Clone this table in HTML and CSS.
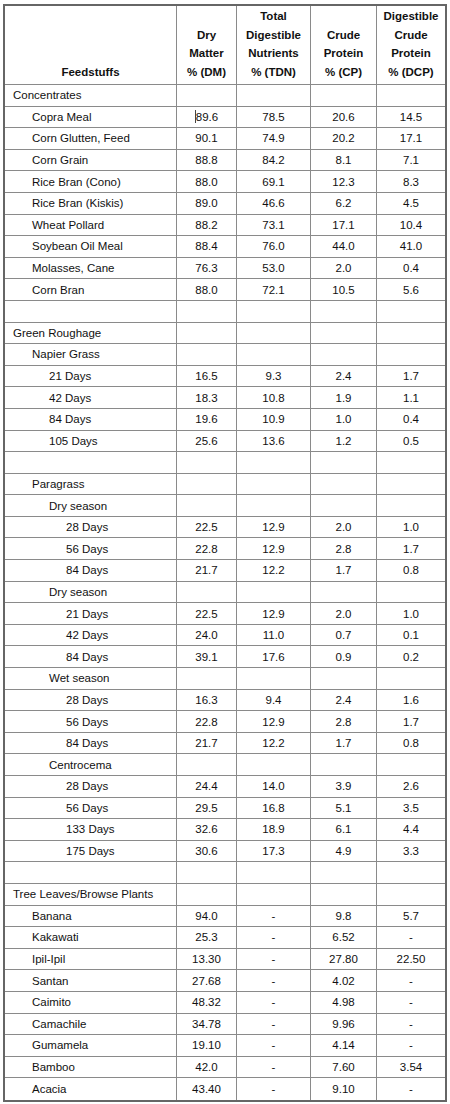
FILE: index.html
```html
<!DOCTYPE html>
<html lang="en">
<head>
<meta charset="utf-8">
<title>Feedstuffs</title>
<link rel="stylesheet" href="styles.css">
</head>
<body>
<table class="feed">
  <colgroup>
    <col class="c-name">
    <col class="c-dm">
    <col class="c-tdn">
    <col class="c-cp">
    <col class="c-dcp">
  </colgroup>
  <thead>
    <tr>
      <th>Feedstuffs</th>
      <th>Dry<br>Matter<br>% (DM)</th>
      <th>Total<br>Digestible<br>Nutrients<br>% (TDN)</th>
      <th>Crude<br>Protein<br>% (CP)</th>
      <th>Digestible<br>Crude<br>Protein<br>% (DCP)</th>
    </tr>
  </thead>
  <tbody>
    <tr><td class="l0">Concentrates</td><td></td><td></td><td></td><td></td></tr>
    <tr><td class="l1">Copra Meal</td><td><span class="caret"></span>89.6</td><td>78.5</td><td>20.6</td><td>14.5</td></tr>
    <tr><td class="l1">Corn Glutten, Feed</td><td>90.1</td><td>74.9</td><td>20.2</td><td>17.1</td></tr>
    <tr><td class="l1">Corn Grain</td><td>88.8</td><td>84.2</td><td>8.1</td><td>7.1</td></tr>
    <tr><td class="l1">Rice Bran (Cono)</td><td>88.0</td><td>69.1</td><td>12.3</td><td>8.3</td></tr>
    <tr><td class="l1">Rice Bran (Kiskis)</td><td>89.0</td><td>46.6</td><td>6.2</td><td>4.5</td></tr>
    <tr><td class="l1">Wheat Pollard</td><td>88.2</td><td>73.1</td><td>17.1</td><td>10.4</td></tr>
    <tr><td class="l1">Soybean Oil Meal</td><td>88.4</td><td>76.0</td><td>44.0</td><td>41.0</td></tr>
    <tr><td class="l1">Molasses, Cane</td><td>76.3</td><td>53.0</td><td>2.0</td><td>0.4</td></tr>
    <tr><td class="l1">Corn Bran</td><td>88.0</td><td>72.1</td><td>10.5</td><td>5.6</td></tr>
    <tr><td class="l0"></td><td></td><td></td><td></td><td></td></tr>
    <tr><td class="l0">Green Roughage</td><td></td><td></td><td></td><td></td></tr>
    <tr><td class="l1">Napier Grass</td><td></td><td></td><td></td><td></td></tr>
    <tr><td class="l2">21 Days</td><td>16.5</td><td>9.3</td><td>2.4</td><td>1.7</td></tr>
    <tr><td class="l2">42 Days</td><td>18.3</td><td>10.8</td><td>1.9</td><td>1.1</td></tr>
    <tr><td class="l2">84 Days</td><td>19.6</td><td>10.9</td><td>1.0</td><td>0.4</td></tr>
    <tr><td class="l2">105 Days</td><td>25.6</td><td>13.6</td><td>1.2</td><td>0.5</td></tr>
    <tr><td class="l0"></td><td></td><td></td><td></td><td></td></tr>
    <tr><td class="l1">Paragrass</td><td></td><td></td><td></td><td></td></tr>
    <tr><td class="l2">Dry season</td><td></td><td></td><td></td><td></td></tr>
    <tr><td class="l3">28 Days</td><td>22.5</td><td>12.9</td><td>2.0</td><td>1.0</td></tr>
    <tr><td class="l3">56 Days</td><td>22.8</td><td>12.9</td><td>2.8</td><td>1.7</td></tr>
    <tr><td class="l3">84 Days</td><td>21.7</td><td>12.2</td><td>1.7</td><td>0.8</td></tr>
    <tr><td class="l2">Dry season</td><td></td><td></td><td></td><td></td></tr>
    <tr><td class="l3">21 Days</td><td>22.5</td><td>12.9</td><td>2.0</td><td>1.0</td></tr>
    <tr><td class="l3">42 Days</td><td>24.0</td><td>11.0</td><td>0.7</td><td>0.1</td></tr>
    <tr><td class="l3">84 Days</td><td>39.1</td><td>17.6</td><td>0.9</td><td>0.2</td></tr>
    <tr><td class="l2">Wet season</td><td></td><td></td><td></td><td></td></tr>
    <tr><td class="l3">28 Days</td><td>16.3</td><td>9.4</td><td>2.4</td><td>1.6</td></tr>
    <tr><td class="l3">56 Days</td><td>22.8</td><td>12.9</td><td>2.8</td><td>1.7</td></tr>
    <tr><td class="l3">84 Days</td><td>21.7</td><td>12.2</td><td>1.7</td><td>0.8</td></tr>
    <tr><td class="l2">Centrocema</td><td></td><td></td><td></td><td></td></tr>
    <tr><td class="l3">28 Days</td><td>24.4</td><td>14.0</td><td>3.9</td><td>2.6</td></tr>
    <tr><td class="l3">56 Days</td><td>29.5</td><td>16.8</td><td>5.1</td><td>3.5</td></tr>
    <tr><td class="l3">133 Days</td><td>32.6</td><td>18.9</td><td>6.1</td><td>4.4</td></tr>
    <tr><td class="l3">175 Days</td><td>30.6</td><td>17.3</td><td>4.9</td><td>3.3</td></tr>
    <tr><td class="l0"></td><td></td><td></td><td></td><td></td></tr>
    <tr><td class="l0">Tree Leaves/Browse Plants</td><td></td><td></td><td></td><td></td></tr>
    <tr><td class="l1">Banana</td><td>94.0</td><td>-</td><td>9.8</td><td>5.7</td></tr>
    <tr><td class="l1">Kakawati</td><td>25.3</td><td>-</td><td>6.52</td><td>-</td></tr>
    <tr><td class="l1">Ipil-Ipil</td><td>13.30</td><td>-</td><td>27.80</td><td>22.50</td></tr>
    <tr><td class="l1">Santan</td><td>27.68</td><td>-</td><td>4.02</td><td>-</td></tr>
    <tr><td class="l1">Caimito</td><td>48.32</td><td>-</td><td>4.98</td><td>-</td></tr>
    <tr><td class="l1">Camachile</td><td>34.78</td><td>-</td><td>9.96</td><td>-</td></tr>
    <tr><td class="l1">Gumamela</td><td>19.10</td><td>-</td><td>4.14</td><td>-</td></tr>
    <tr><td class="l1">Bamboo</td><td>42.0</td><td>-</td><td>7.60</td><td>3.54</td></tr>
    <tr><td class="l1">Acacia</td><td>43.40</td><td>-</td><td>9.10</td><td>-</td></tr>
  </tbody>
</table>
</body>
</html>
```

FILE: styles.css
```css
html, body {
  margin: 0;
  padding: 0;
  background: #ffffff;
}

body {
  font-family: "Liberation Sans", Arial, sans-serif;
  font-size: 11.5px;
  color: #111111;
}

.feed {
  margin: 4px 0 0 3px;
  border-collapse: separate;
  border-spacing: 0;
  table-layout: fixed;
  width: 444px;
  border: 2px solid #666666;
}

.c-name { width: 172px; }
.c-dm { width: 60px; }
.c-tdn { width: 74px; }
.c-cp { width: 66px; }
.c-dcp { width: 68px; }

.feed th,
.feed td {
  box-sizing: border-box;
  padding: 0;
  border-right: 1px solid #8a8a8a;
  border-bottom: 1px solid #8a8a8a;
  text-align: center;
  white-space: nowrap;
}

.feed th:last-child,
.feed td:last-child {
  border-right: 0;
}

.feed tbody tr:last-child td {
  border-bottom: 0;
}

.feed th {
  height: 79px;
  font-weight: bold;
  line-height: 18.5px;
  vertical-align: bottom;
  padding-bottom: 3px;
}

.feed td {
  height: 21.6px;
  line-height: 14px;
  vertical-align: middle;
}

.feed td.l0 { text-align: left; padding-left: 8px; }
.feed td.l1 { text-align: left; padding-left: 27px; }
.feed td.l2 { text-align: left; padding-left: 44px; }
.feed td.l3 { text-align: left; padding-left: 61px; }

.caret {
  display: inline-block;
  width: 0;
  height: 13px;
  margin-right: 0;
  vertical-align: -2px;
  border-left: 1px solid #444444;
}
```
